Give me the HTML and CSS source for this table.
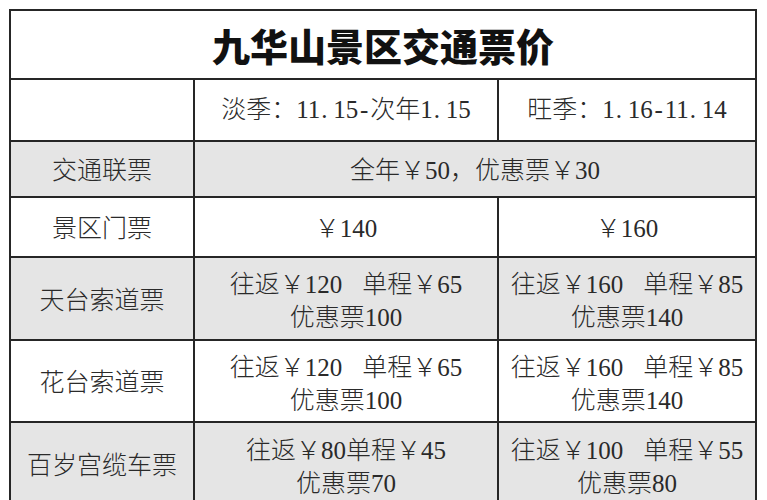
FILE: index.html
```html
<!DOCTYPE html>
<html lang="zh-CN">
<head>
<meta charset="utf-8">
<title>九华山景区交通票价</title>
<link rel="stylesheet" href="styles.css">
</head>
<body>
<div class="sheet">
  <div class="cell title span3">九华山景区交通票价</div>

  <div class="cell"></div>
  <div class="cell season">淡季：11<span class="dot">.</span>15<span class="dash">-</span>次年1<span class="dot">.</span>15</div>
  <div class="cell season">旺季：1<span class="dot">.</span>16<span class="dash">-</span>11<span class="dot">.</span>14</div>

  <div class="cell gray">交通联票</div>
  <div class="cell gray span2">全年￥50，优惠票￥30</div>

  <div class="cell">景区门票</div>
  <div class="cell">￥140</div>
  <div class="cell">￥160</div>

  <div class="cell gray">天台索道票</div>
  <div class="cell gray two"><span>往返￥120<span class="gap"></span>单程￥65</span><span>优惠票100</span></div>
  <div class="cell gray two"><span>往返￥160<span class="gap"></span>单程￥85</span><span>优惠票140</span></div>

  <div class="cell">花台索道票</div>
  <div class="cell two"><span>往返￥120<span class="gap"></span>单程￥65</span><span>优惠票100</span></div>
  <div class="cell two"><span>往返￥160<span class="gap"></span>单程￥85</span><span>优惠票140</span></div>

  <div class="cell gray">百岁宫缆车票</div>
  <div class="cell gray two"><span>往返￥80单程￥45</span><span>优惠票70</span></div>
  <div class="cell gray two"><span>往返￥100<span class="gap"></span>单程￥55</span><span>优惠票80</span></div>
</div>
</body>
</html>
```

FILE: styles.css
```css
html, body {
  margin: 0;
  padding: 0;
  background: #ffffff;
  height: 500px;
  overflow: hidden;
}

.sheet {
  margin: 9px 0 0 9px;
  width: 748px;
  box-sizing: border-box;
  padding: 2px;
  display: grid;
  grid-template-columns: 182px 302px 256px;
  grid-template-rows: 67px 60px 54px 58px 81px 80px 82px;
  gap: 2px;
  background: #262626;
  font-family: "Liberation Serif", "Noto Sans CJK SC", serif;
  font-weight: 300;
  font-size: 25px;
  color: #2a2a2a;
}

.cell {
  background: #ffffff;
  display: flex;
  flex-direction: column;
  align-items: center;
  justify-content: center;
  text-align: center;
  line-height: 30px;
  padding-top: 4px;
  box-sizing: border-box;
  white-space: nowrap;
}

.season {
  display: block;
  line-height: 56px;
  padding-top: 2px;
}

.dot {
  display: inline-block;
  width: 12px;
  text-align: left;
  padding-left: 1px;
}

.dash {
  display: inline-block;
  width: 12px;
  text-align: center;
}

.gray {
  background: #e5e5e5;
}

.span3 {
  grid-column: 1 / span 3;
}

.span2 {
  grid-column: 2 / span 2;
}

.title {
  font-family: "Noto Sans CJK SC", sans-serif;
  font-weight: 900;
  font-size: 38px;
  color: #111111;
  line-height: 44px;
  padding-top: 1px;
}

.two {
  line-height: 33px;
  padding-top: 5px;
}

.gap {
  display: inline-block;
  width: 20px;
}
```
